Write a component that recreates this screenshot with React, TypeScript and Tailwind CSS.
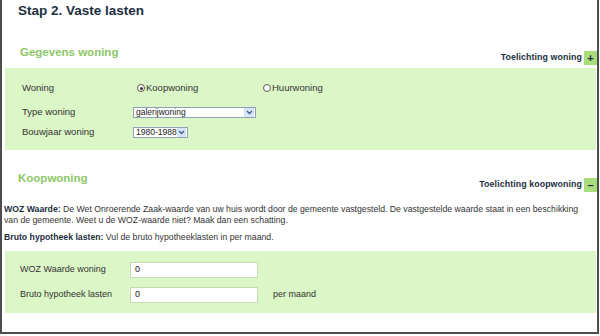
import React from 'react'

const font = { fontFamily: '"Liberation Sans", Arial, sans-serif' }

function Toggle({ label, sign }: { label: string; sign: string }) {
  return (
    <div className="flex items-center">
      <span className="text-[8.8px] font-bold tracking-[0.1px] text-[#1d2f3f]">{label}</span>
      <span className="ml-[2px] flex h-[14px] w-[13px] items-center justify-center bg-[#a9dc7c] text-[11px] font-bold leading-none text-[#1d2f3f]">
        {sign}
      </span>
    </div>
  )
}

function Select({ value, width }: { value: string; width: string }) {
  return (
    <div className={`flex h-[11px] items-center justify-between border border-[#8fa3b8] bg-white pl-[2px] ${width}`}>
      <span className="whitespace-nowrap text-[8.5px] leading-none text-[#222]">{value}</span>
      <span className="mr-[1px] flex h-[9px] w-[10px] items-center justify-center bg-[#d6e4f5]">
        <svg width="7" height="5" viewBox="0 0 7 5">
          <path d="M1 1 L3.5 3.5 L6 1" stroke="#3d5f8f" strokeWidth="1.4" fill="none" />
        </svg>
      </span>
    </div>
  )
}

function Radio({ checked, label }: { checked?: boolean; label: string }) {
  return (
    <div className="flex items-center gap-[1px]">
      <span className="flex h-[8px] w-[8px] items-center justify-center rounded-full border border-[#555] bg-white">
        {checked && <span className="h-[3px] w-[3px] rounded-full bg-[#333]" />}
      </span>
      <span className="text-[9.5px] text-[#333]">{label}</span>
    </div>
  )
}

export default function App() {
  return (
    <div className="h-[336px] w-[600px] overflow-hidden bg-white" style={font}>
      <div className="h-[334px] w-[599px] border-x-2 border-b-2 border-[#4d4d4d]">
        <h1 className="pl-[16px] pt-[2px] text-[13.5px] font-bold leading-[18px] text-[#1d2f3f]">Stap 2. Vaste lasten</h1>

        <div className="mt-[24px] flex h-[24px] items-start justify-between">
          <h2 className="pl-[18px] pt-[1px] text-[11.5px] font-bold leading-[14px] text-[#8cc868]">Gegevens woning</h2>
          <div className="mt-[7px]">
            <Toggle label="Toelichting woning" sign="+" />
          </div>
        </div>

        <div className="ml-[3px] mr-[1px] h-[82px] bg-[#dbf6c7] pl-[17px] pt-[13px]">
          <div className="flex h-[14px] items-center">
            <span className="w-[115px] text-[9.5px] text-[#333]">Woning</span>
            <div className="w-[126px]"><Radio checked label="Koopwoning" /></div>
            <Radio label="Huurwoning" />
          </div>
          <div className="mt-[10px] flex h-[14px] items-center">
            <span className="w-[111px] text-[9.5px] text-[#333]">Type woning</span>
            <Select value="galerijwoning" width="w-[123px]" />
          </div>
          <div className="mt-[6px] flex h-[14px] items-center">
            <span className="w-[111px] text-[9.5px] text-[#333]">Bouwjaar woning</span>
            <Select value="1980-1988" width="w-[55px]" />
          </div>
        </div>

        <div className="mt-[21px] flex h-[24px] items-start justify-between">
          <h2 className="pl-[16px] text-[11.5px] font-bold leading-[14px] text-[#8cc868]">Koopwoning</h2>
          <div className="mt-[7px]">
            <Toggle label="Toelichting koopwoning" sign="–" />
          </div>
        </div>

        <div className="pl-[2px] pr-[6px] pt-[9px] text-[8.7px] leading-[11px] text-[#333]">
          <p>
            <b className="text-[#1d2f3f]">WOZ Waarde:</b> De Wet Onroerende Zaak-waarde van uw huis wordt door de gemeente vastgesteld. De vastgestelde waarde staat in een beschikking van de gemeente. Weet u de WOZ-waarde niet? Maak dan een schatting.
          </p>
          <p className="mt-[6px]">
            <b className="text-[#1d2f3f]">Bruto hypotheek lasten:</b> Vul de bruto hypotheeklasten in per maand.
          </p>
        </div>

        <div className="ml-[3px] mr-[1px] mt-[8px] h-[62px] bg-[#dbf6c7] pl-[15px] pt-[11px]">
          <div className="flex h-[16px] items-center">
            <span className="w-[110px] text-[9px] text-[#333]">WOZ Waarde woning</span>
            <div className="flex h-[16px] w-[128px] items-center border border-[#c9d9b8] bg-white pl-[4px] text-[9px] text-[#222]">0</div>
          </div>
          <div className="mt-[9px] flex h-[16px] items-center">
            <span className="w-[110px] text-[9px] text-[#333]">Bruto hypotheek lasten</span>
            <div className="flex h-[16px] w-[128px] items-center border border-[#c9d9b8] bg-white pl-[4px] text-[9px] text-[#222]">0</div>
            <span className="ml-[15px] text-[9px] text-[#333]">per maand</span>
          </div>
        </div>
      </div>
    </div>
  )
}
